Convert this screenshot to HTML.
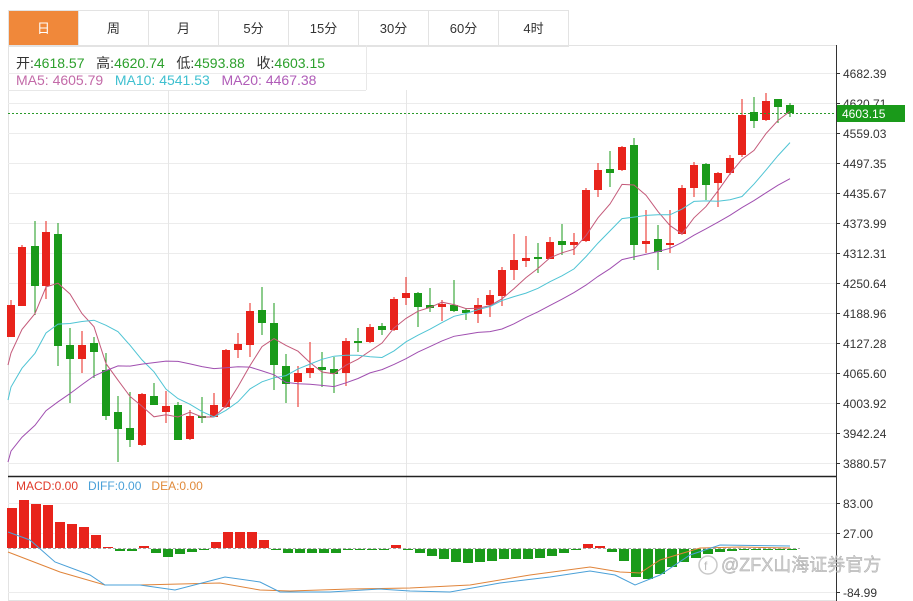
<!DOCTYPE html>
<html><head><meta charset="utf-8"><style>
body{margin:0;width:913px;height:601px;overflow:hidden;background:#fff;font-family:"Liberation Sans","Noto Sans CJK SC",sans-serif;}
.tabs{position:absolute;left:8px;top:10px;height:35px;display:flex;border:1px solid #e3e3e3;border-right:none;}
.tabs div{width:69px;height:35px;line-height:35px;text-align:center;font-size:13px;color:#333;border-right:1px solid #e3e3e3;}
.tabs div.on{background:#f0883a;color:#fff;}
.info{position:absolute;left:16px;font-size:14px;}
svg{position:absolute;left:0;top:0;}
</style></head><body>
<div class="tabs"><div class="on">日</div><div>周</div><div>月</div><div>5分</div><div>15分</div><div>30分</div><div>60分</div><div>4时</div></div>
<svg id="s" width="913" height="601"></svg>
<div class="info" style="top:53px;color:#333">开:<span style="color:#2ca02c">4618.57</span>&nbsp;&nbsp; 高:<span style="color:#2ca02c">4620.74</span>&nbsp;&nbsp; 低:<span style="color:#2ca02c">4593.88</span>&nbsp;&nbsp; 收:<span style="color:#2ca02c">4603.15</span></div>
<div class="info" style="top:72px"><span style="color:#c36aa8">MA5: 4605.79</span>&nbsp;&nbsp; <span style="color:#3fc0d0">MA10: 4541.53</span>&nbsp;&nbsp; <span style="color:#b05cb8">MA20: 4467.38</span></div>
<div class="info" style="top:479px;font-size:12px"><span style="color:#e03a2a">MACD:0.00</span>&nbsp;&nbsp; <span style="color:#4aa0d8">DIFF:0.00</span>&nbsp;&nbsp; <span style="color:#e08a3a">DEA:0.00</span></div>
<script>
var s='';
s+='<rect x="8.5" y="45.5" width="828" height="555" fill="none" stroke="#e3e3e3"/>';
s+='<line x1="8" y1="90.5" x2="366" y2="90.5" stroke="#e8e8e8"/><line x1="366.5" y1="45" x2="366.5" y2="90" stroke="#e8e8e8"/>';
var labs=['4682.39','4620.71','4559.03','4497.35','4435.67','4373.99','4312.31','4250.64','4188.96','4127.28','4065.60','4003.92','3942.24','3880.57'];
for(var i=0;i<14;i++){var y=73+i*30;s+='<line x1="8" y1="'+(y+.5)+'" x2="836" y2="'+(y+.5)+'" stroke="#ececec"/><line x1="836" y1="'+(y+.5)+'" x2="840" y2="'+(y+.5)+'" stroke="#333"/><text x="843" y="'+(y+5)+'" font-size="12" fill="#333">'+labs[i]+'</text>';}
[168,406].forEach(function(x){s+='<line x1="'+(x+.5)+'" y1="90" x2="'+(x+.5)+'" y2="601" stroke="#e6e6e6"/>';});
s+='<line x1="836.5" y1="45" x2="836.5" y2="601" stroke="#333"/>';
s+='<line x1="8" y1="476.5" x2="836" y2="476.5" stroke="#222" stroke-width="1.5"/>';
[[503,'83.00'],[533,'27.00'],[592,'-84.99']].forEach(function(a){s+='<line x1="8" y1="'+(a[0]+.5)+'" x2="836" y2="'+(a[0]+.5)+'" stroke="#ececec"/><line x1="836" y1="'+(a[0]+.5)+'" x2="840" y2="'+(a[0]+.5)+'" stroke="#333"/><text x="843" y="'+(a[0]+5)+'" font-size="12" fill="#333">'+a[1]+'</text>';});
var c=[[11,305,337,300,337,1],[22,247,306,245,306,1],[35,246,286,221,315,0],[46,232,286,221,299,1],[58,234,346,223,366,0],[70,345,359,328,403,0],[82,345,359,331,373,1],[94,343,352,337,378,0],[106,370,416,353,420,0],[118,412,429,396,462,0],[130,428,440,392,447,0],[142,394,445,393,446,1],[154,396,405,383,405,0],[166,406,412,391,423,1],[178,405,440,402,440,0],[190,416,439,410,440,1],[202,416,418,397,423,0],[214,405,417,393,417,1],[226,350,407,349,408,1],[238,344,350,333,358,1],[250,311,345,303,357,1],[262,310,323,287,335,0],[274,323,365,303,390,0],[286,366,384,354,403,0],[298,373,382,366,407,1],[310,368,373,342,378,1],[322,367,370,352,387,0],[334,369,374,357,393,0],[346,341,373,338,386,1],[358,341,343,328,352,0],[370,327,342,324,343,1],[382,326,330,323,335,0],[394,299,330,297,331,1],[406,293,298,277,305,1],[418,293,307,292,327,0],[430,305,308,288,312,0],[442,304,307,300,321,1],[454,305,311,280,312,0],[466,310,313,308,320,0],[478,305,314,298,323,1],[490,295,305,290,317,1],[502,270,296,267,306,1],[514,260,270,234,280,1],[526,258,261,236,267,1],[538,257,259,243,273,0],[550,242,259,237,259,1],[562,241,245,224,255,0],[574,242,245,233,255,1],[586,190,241,188,242,1],[598,170,190,163,197,1],[610,169,173,151,187,0],[622,147,170,146,171,1],[634,145,245,138,260,0],[646,241,244,210,253,1],[658,239,252,225,270,0],[670,243,245,210,253,1],[682,188,234,185,235,1],[694,165,188,162,197,1],[706,164,185,163,200,0],[718,173,183,172,207,1],[730,158,173,155,175,1],[742,115,155,99,157,1],[754,112,121,97,128,0],[766,101,120,93,121,1],[778,99,107,99,123,0],[790,105,113,103,117,0]];
var cl=[],xs=[];
c.forEach(function(d){var col=d[5]?'#e8231b':'#1a9a1a';s+='<line x1="'+d[0]+'" y1="'+d[3]+'" x2="'+d[0]+'" y2="'+d[4]+'" stroke="'+col+'"/>';s+='<rect x="'+(d[0]-4)+'" y="'+d[1]+'" width="8" height="'+Math.max(1.5,d[2]-d[1])+'" fill="'+col+'"/>';cl.push(d[5]?d[1]:d[2]);xs.push(d[0]);});
var hist=[];for(var i=0;i<10;i++)hist.push(524);for(i=0;i<5;i++)hist.push(435);for(i=0;i<5;i++)hist.push(365);
var all=hist.concat(cl);
function ma(n,col){var pts=[];for(var i=0;i<cl.length;i++){var k=i+20,sum=0;for(var j=k-n+1;j<=k;j++)sum+=all[j];pts.push(xs[i]+','+(sum/n).toFixed(1));}var k=19,sum=0;for(var j=k-n+1;j<=k;j++)sum+=all[j];s+='<polyline fill="none" stroke="'+col+'" stroke-width="1" points="8,'+(sum/n).toFixed(1)+' '+pts.join(' ')+'"/>';}
ma(5,'#c45a7a');ma(10,'#4fc4d4');ma(20,'#a04fb0');
s+='<line x1="8" y1="113.5" x2="836" y2="113.5" stroke="#2a9a2a" stroke-dasharray="2,2"/>';
s+='<rect x="837" y="105" width="68" height="17" fill="#1a9a1a"/><text x="842" y="118" font-size="12" fill="#fff">4603.15</text>';
var m=[40,48,44,43,26,24,21,13,1,-2,-2,2,-4,-8,-5,-3,-0.5,6,16,16,16,8,-0.5,-4,-4,-4,-4,-4,-0.5,-0.5,-0.5,-0.5,3,-0.5,-4,-7,-10,-13,-14,-13,-12,-10,-10,-10,-9,-7,-4,-0.5,4,2,-3,-12,-28,-30,-25,-18,-13,-9,-5,-3,-2,-1,-1,-1,-1,-1];
s+='<line x1="8" y1="548.5" x2="800" y2="548.5" stroke="#aaa" stroke-dasharray="3,2"/>';
m.forEach(function(v,i){var x=12+i*12;var col=v>0?'#e8231b':'#1a9a1a';var h=Math.abs(v);s+='<rect x="'+(x-5)+'" y="'+(v>0?548-h:549)+'" width="10" height="'+Math.max(1,h)+'" fill="'+col+'"/>';});
s+='<polyline fill="none" stroke="#e0843a" points="8,552 60,572 105,585 140,585 220,583 260,590 290,591 350,589 410,588 470,585 530,575 590,567 620,572 640,573 660,560 700,548 740,547 790,548"/>';
s+='<polyline fill="none" stroke="#4aa0d8" points="8,532 30,540 55,562 90,575 105,585 140,585 175,590 225,577 260,582 280,592 330,592 380,589 410,591 450,592 500,583 550,577 590,571 615,575 635,585 660,575 690,555 720,545 790,546"/>';
s+='<circle cx="708" cy="565" r="9" fill="none" stroke="#bbb" stroke-width="1.5" opacity=".8"/><text x="704" y="570" font-size="12" fill="#bbb">f</text>';
s+='<text x="721" y="571" font-size="18" fill="#c8c8c8" stroke="#999" stroke-width=".4" opacity=".85" font-family="Liberation Sans,Noto Sans CJK SC,sans-serif">@ZFX山海证券官方</text>';
document.getElementById('s').innerHTML=s;
</script>
</body></html>
